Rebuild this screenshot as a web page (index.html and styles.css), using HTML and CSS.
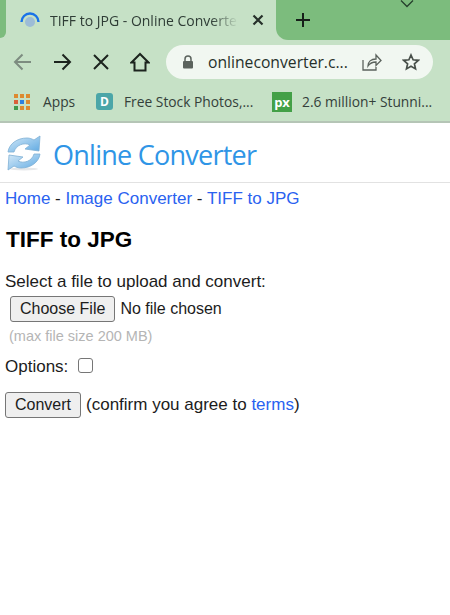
FILE: index.html
```html
<!DOCTYPE html>
<html lang="en">
<head>
    <meta charset="UTF-8">
    <meta name="viewport" content="width=device-width, initial-scale=1.0">
    <title>TIFF to JPG - Online Converter</title>
    <link rel="stylesheet" href="styles.css">
</head>
<body>
    <div class="browser">
        <div class="tab-strip">
            <div class="strip-edge"></div>
            <div class="tab">
                <svg class="favicon" width="20" height="20" viewBox="0 0 20 20">
                    <circle cx="10" cy="12" r="5" fill="#9dbcd6"/>
                    <path d="M1.500 12a8.500 8.500 0 0 1 17 0" fill="none" stroke="#1a73e8" stroke-width="2.400"/>
                </svg>
                <span class="tab-title">TIFF to JPG - Online Converter</span>
                <svg class="tab-close" width="12" height="12" viewBox="0 0 12 12">
                    <path d="M1.500 1.500l9 9M10.500 1.500l-9 9" stroke="#26302a" stroke-width="2.200"/>
                </svg>
            </div>
            <div class="strip-rest">
                <svg class="new-tab" width="16" height="16" viewBox="0 0 16 16">
                    <path d="M8 1v14M1 8h14" stroke="#17201a" stroke-width="2"/>
                </svg>
                <svg class="tab-menu" width="14" height="8" viewBox="0 0 14 8">
                    <path d="M1 .5l6 6 6-6" fill="none" stroke="#26402c" stroke-width="1.300"/>
                </svg>
            </div>
        </div>

        <div class="toolbar">
            <div class="nav-icons">
                <svg width="20" height="18" viewBox="0 0 20 18">
                    <path d="M18 9H2M9.500 1.500L2 9l7.500 7.500" fill="none" stroke="#7d8c80" stroke-width="2"/>
                </svg>
                <svg width="20" height="18" viewBox="0 0 20 18">
                    <path d="M2 9h16M10.500 1.500L18 9l-7.500 7.500" fill="none" stroke="#1c241e" stroke-width="2"/>
                </svg>
                <svg width="20" height="18" viewBox="0 0 20 18">
                    <path d="M3 2l14 14M17 2L3 16" fill="none" stroke="#1c241e" stroke-width="2"/>
                </svg>
                <svg width="20" height="20" viewBox="0 0 20 20">
                    <path d="M10 2L1.500 10.500H4.500V18.500H15.500V10.500H18.500Z" fill="none" stroke="#1c241e" stroke-width="2"/>
                </svg>
            </div>
            <div class="omnibox">
                <svg class="lock" width="12" height="14" viewBox="0 0 12 14">
                    <path d="M3 6V4a3 3 0 0 1 6 0v2" fill="none" stroke="#5b635d" stroke-width="1.500"/>
                    <rect x="1" y="6" width="10" height="7.500" rx="1" fill="#5b635d"/>
                </svg>
                <span class="url">onlineconverter.c...</span>
                <svg class="share-icon" width="20" height="18" viewBox="0 0 20 18">
                    <path d="M1 7v10h13v-3M6 13c0-4 3-7 8-7V2l5 5.500-5 5V9c-4 0-6 1-8 4z" fill="none" stroke="#5b635d" stroke-width="1.300"/>
                </svg>
                <svg class="star-icon" width="18" height="18" viewBox="0 0 18 18">
                    <path d="M9 2l2.100 4.800 5.200.5-3.900 3.500 1.100 5.100L9 13.300 4.500 15.900l1.100-5.100-3.900-3.500 5.200-.5z" fill="none" stroke="#48504a" stroke-width="1.700"/>
                </svg>
            </div>
        </div>

        <div class="bookmarks">
            <div class="bookmark bookmark-apps">
                <div class="apps-grid">
                    <i class="dot-o"></i><i class="dot-o"></i><i class="dot-o"></i>
                    <i class="dot-r"></i><i class="dot-b"></i><i class="dot-o"></i>
                    <i class="dot-g"></i><i class="dot-o"></i><i class="dot-o"></i>
                </div>
                <span>Apps</span>
            </div>
            <div class="bookmark bookmark-stock">
                <div class="badge badge-teal">D</div>
                <span>Free Stock Photos,...</span>
            </div>
            <div class="bookmark">
                <div class="badge badge-green">px</div>
                <span>2.6 million+ Stunni...</span>
            </div>
        </div>
    </div>

    <div class="site-header">
        <svg class="logo" width="38" height="36" viewBox="0 0 38 36">
            <defs>
                <linearGradient id="swirl" x1="0" y1="0" x2="1" y2="1">
                    <stop offset="0" stop-color="#d6eaf8"/>
                    <stop offset="1" stop-color="#5ea9e2"/>
                </linearGradient>
            </defs>
            <ellipse cx="19" cy="34" rx="14" ry="1.500" fill="#e6e8ea"/>
            <path id="swirl-top" d="M3 17C4 9 12 3 22 3c3 0 5 1 7 2l6-4-1 15-14-2 5-4c-6-3-14 0-16 7z" fill="url(#swirl)" stroke="#7fb0d4" stroke-width=".8"/>
            <path d="M35 19c-1 8-9 14-19 14-3 0-5-1-7-2l-6 4 1-15 14 2-5 4c6 3 14 0 16-7z" fill="url(#swirl)" stroke="#7fb0d4" stroke-width=".8"/>
        </svg>
        <span class="site-name">Online Converter</span>
    </div>

    <div class="breadcrumb">
        <a href="#">Home</a> - <a href="#">Image Converter</a> - <a href="#">TIFF to JPG</a>
    </div>

    <h1>TIFF to JPG</h1>

    <form class="convert-form">
        <div class="file-label">Select a file to upload and convert:</div>
        <div class="file-row">
            <button type="button" class="btn">Choose File</button>
            <span>No file chosen</span>
        </div>
        <div class="file-hint">(max file size 200 MB)</div>
        <div class="options-row">
            <span>Options:</span>
            <span class="checkbox"></span>
        </div>
        <div class="submit-row">
            <button type="button" class="btn">Convert</button>
            <span>(confirm you agree to <a href="#">terms</a>)</span>
        </div>
    </form>
</body>
</html>
```

FILE: styles.css
```css
html, body {
    margin: 0;
    padding: 0;
    background-color: #fff;
}
body {
    font-family: "Liberation Sans", Arial, sans-serif;
    font-size: 17px;
    color: #1c1c1c;
    height: 615px;
    overflow: hidden;
}
a {
    color: #2a62f0;
    text-decoration: none;
}

/* browser chrome */
.browser {
    font-family: "Open Sans", "Noto Sans", sans-serif;
    background-color: #c6e1c6;
    border-bottom: 2px solid #b5c5b6;
}
.tab-strip {
    display: flex;
    height: 40px;
}
.strip-edge {
    flex: none;
    width: 6px;
    height: 38px;
    background-color: #7cbc7d;
    border-bottom-right-radius: 6px;
}
.tab {
    display: flex;
    align-items: center;
    flex: none;
    width: 270px;
    padding-left: 14px;
    box-sizing: border-box;
}
.strip-rest {
    display: flex;
    align-items: center;
    flex: 1;
    background-color: #7cbc7d;
    border-bottom-left-radius: 12px;
}
.favicon {
    flex: none;
    margin-right: 10px;
}
.tab-title {
    width: 192px;
    flex: none;
    overflow: hidden;
    white-space: nowrap;
    font-size: 14px;
    color: #2f3d36;
    -webkit-mask-image: linear-gradient(to right, #000 84%, transparent 98%);
    mask-image: linear-gradient(to right, #000 84%, transparent 98%);
}
.tab-close {
    flex: none;
    margin-left: 10px;
}
.new-tab {
    margin-left: 19px;
}
.tab-menu {
    margin-left: 89px;
    align-self: flex-start;
}
.toolbar {
    display: flex;
    align-items: center;
    height: 43px;
    padding-left: 13px;
}
.nav-icons {
    display: flex;
    align-items: center;
    gap: 19px;
}
.omnibox {
    display: flex;
    align-items: center;
    width: 267px;
    height: 34px;
    margin-left: 16px;
    padding-left: 16px;
    box-sizing: border-box;
    background-color: #f1f7f1;
    border-radius: 17px;
}
.url {
    width: 148px;
    margin-left: 14px;
    flex: none;
    white-space: nowrap;
    font-size: 15.700px;
    color: #26302a;
}
.share-icon {
    flex: none;
    margin-left: 6px;
}
.star-icon {
    flex: none;
    margin-left: 20px;
}
.bookmarks {
    display: flex;
    align-items: center;
    height: 37px;
    padding: 0 0 1px 14px;
    font-size: 13.800px;
    color: #34403a;
}
.bookmark {
    display: flex;
    align-items: center;
    white-space: nowrap;
}
.bookmark-apps {
    width: 82px;
    gap: 13px;
}
.bookmark-stock {
    width: 176px;
    gap: 11px;
}
.bookmark-stock + .bookmark {
    gap: 10px;
}
.apps-grid {
    display: grid;
    grid-template-columns: repeat(3, 4px);
    grid-auto-rows: 4px;
    gap: 2px;
}
.dot-o { background-color: #dd8a30; }
.dot-r { background-color: #d9603a; }
.dot-b { background-color: #2d7fe0; }
.dot-g { background-color: #3f9a4c; }
.badge {
    display: flex;
    align-items: center;
    justify-content: center;
    color: #fff;
    font-weight: 700;
}
.badge-teal {
    width: 17px;
    height: 17px;
    font-size: 12px;
    background-color: #4ba6a8;
    border-radius: 3px;
}
.badge-green {
    width: 20px;
    height: 20px;
    font-size: 13px;
    background-color: #43a047;
}

/* page */
.site-header {
    display: flex;
    align-items: center;
    height: 59px;
    padding-left: 5px;
    gap: 10px;
    border-bottom: 1px solid #e2e2e2;
}
.site-name {
    margin-top: 4px;
    font-family: "Open Sans", "Noto Sans", sans-serif;
    font-size: 27px;
    letter-spacing: -0.750px;
    color: #2f95e6;
}
.breadcrumb {
    margin-top: 6px;
    padding-left: 5px;
    line-height: 19px;
}
h1 {
    margin: 20px 0 0 6px;
    font-size: 22.500px;
    line-height: 24px;
    color: #000;
}
.convert-form {
    margin-top: 21px;
    padding-left: 5px;
}
.file-label {
    line-height: 18px;
}
.file-row {
    display: flex;
    align-items: center;
    gap: 5px;
    margin: 5px 0 0 5px;
    font-size: 16px;
}
.btn {
    height: 26px;
    padding: 0 9px;
    font-family: inherit;
    font-size: 16px;
    color: #1c1c1c;
    background-color: #efefef;
    border: 1px solid #767676;
    border-radius: 3px;
}
.file-hint {
    margin: 6px 0 0 4px;
    font-size: 14.500px;
    line-height: 16px;
    color: #b5b5b5;
}
.options-row {
    display: flex;
    align-items: center;
    gap: 10px;
    margin-top: 14px;
    line-height: 18px;
}
.checkbox {
    width: 13px;
    height: 13px;
    margin-top: -4px;
    border: 1px solid #767676;
    border-radius: 3px;
    background-color: #fff;
}
.submit-row {
    display: flex;
    align-items: center;
    gap: 5px;
    margin-top: 16px;
}
```
